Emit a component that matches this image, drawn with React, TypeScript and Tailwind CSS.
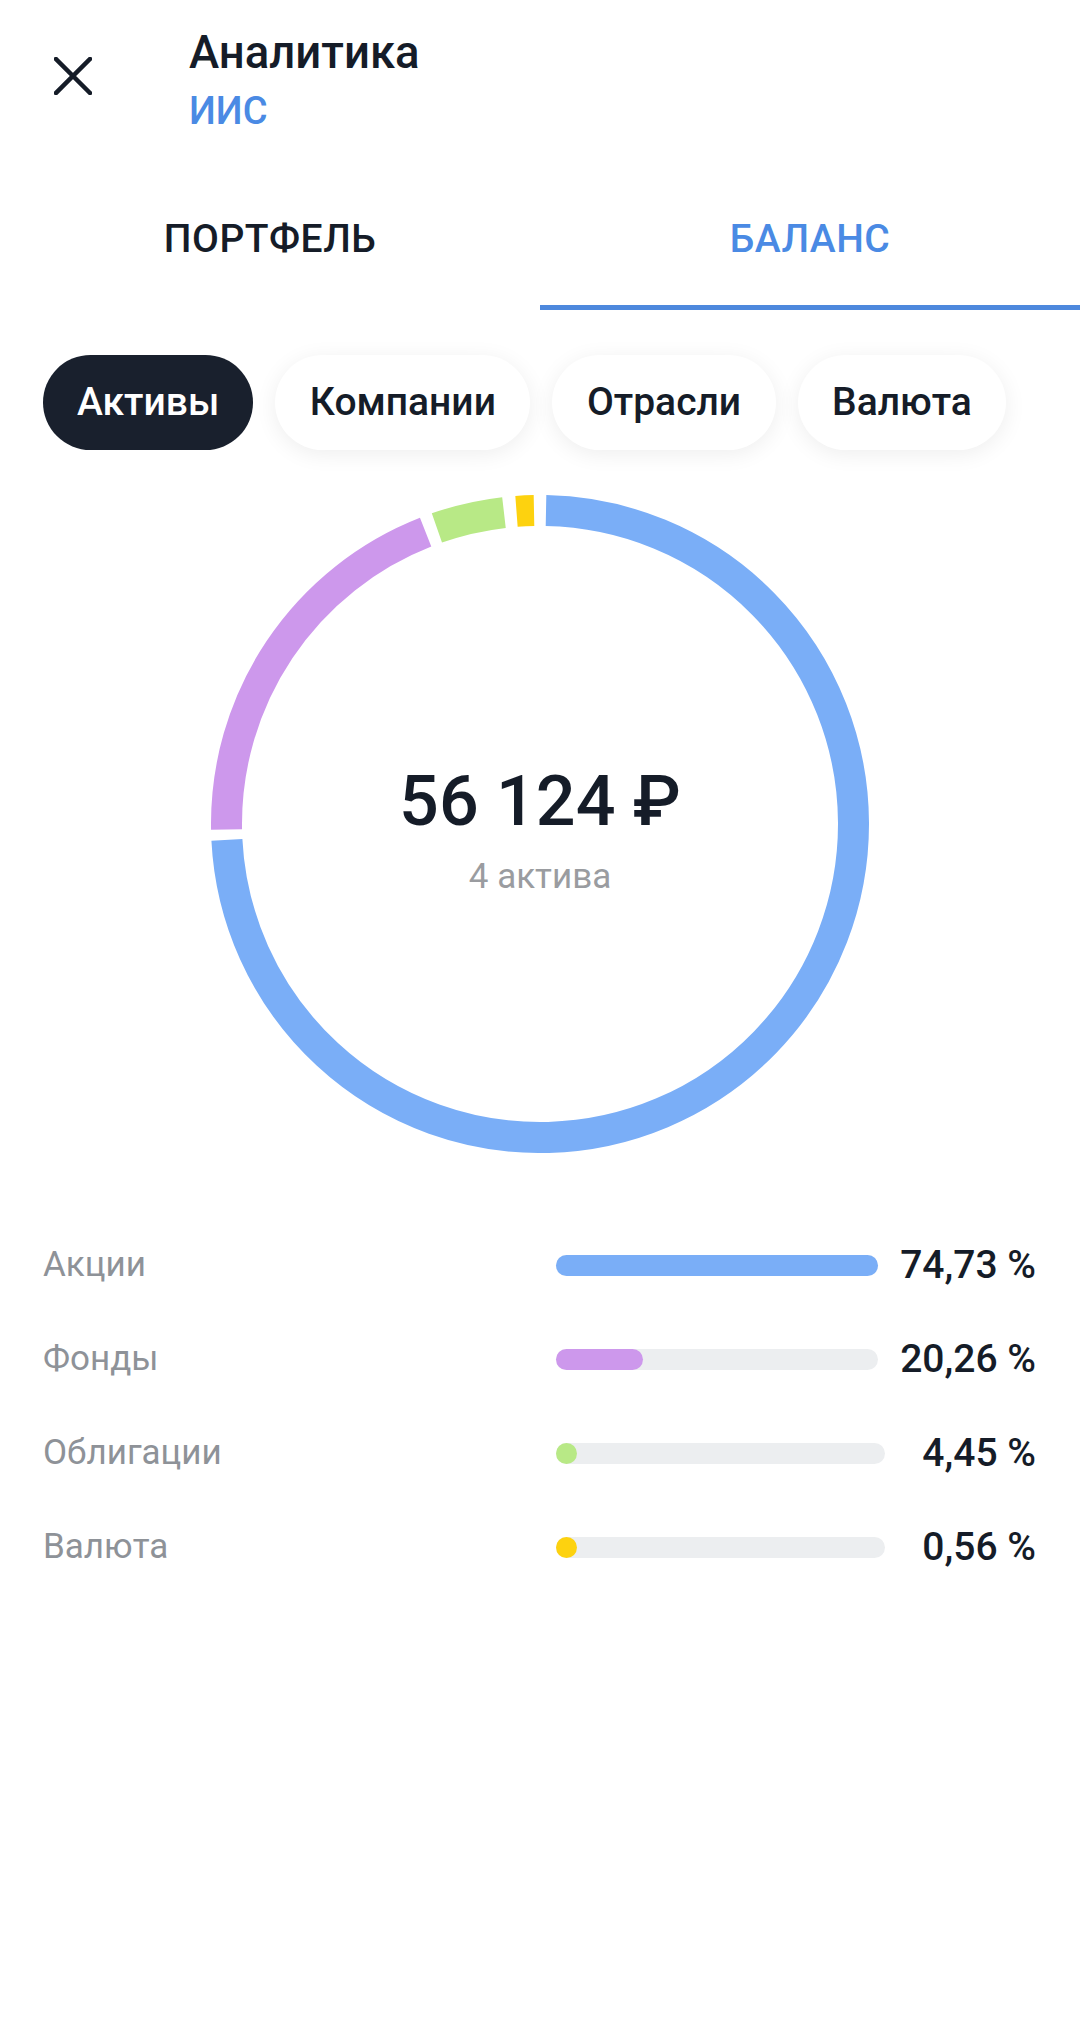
import React from "react";

interface Segment {
  label: string;
  value: number;
  color: string;
  // arc in degrees, clockwise from 12 o'clock
  from: number;
  to: number;
}

const segments: Segment[] = [
  { label: "Акции", value: 74.73, color: "#7aaef7", from: 1.1, to: 267.1 },
  { label: "Фонды", value: 20.26, color: "#cd98ec", from: 269, to: 338.6 },
  { label: "Облигации", value: 4.45, color: "#b8e986", from: 340.8, to: 353.4 },
  { label: "Валюта", value: 0.56, color: "#fdd20f", from: 355.7, to: 358.9 },
];

const filters = ["Активы", "Компании", "Отрасли", "Валюта"];

const polar = (cx: number, cy: number, r: number, deg: number) => {
  const rad = ((deg - 90) * Math.PI) / 180;
  return { x: cx + r * Math.cos(rad), y: cy + r * Math.sin(rad) };
};

const arcPath = (cx: number, cy: number, r: number, from: number, to: number) => {
  const a = polar(cx, cy, r, from);
  const b = polar(cx, cy, r, to);
  const large = to - from > 180 ? 1 : 0;
  return `M ${a.x} ${a.y} A ${r} ${r} 0 ${large} 1 ${b.x} ${b.y}`;
};

const formatPct = (v: number) => v.toFixed(2).replace(".", ",") + " %";

const Donut = () => {
  const size = 658;
  const c = size / 2;
  return (
    <div className="relative mx-auto h-[658px] w-[658px]">
      <svg width={size} height={size} viewBox={`0 0 ${size} ${size}`}>
        {segments.map((s) => (
          <path
            key={s.label}
            d={arcPath(c, c, 313.5, s.from, s.to)}
            fill="none"
            stroke={s.color}
            strokeWidth={31}
            strokeLinecap="butt"
          />
        ))}
      </svg>
      <div className="absolute left-0 right-0 top-[266px] flex flex-col items-center">
        <span className="text-[70px] font-medium leading-[80px] text-[#151c28]">
          56 124 ₽
        </span>
        <span className="mt-[15px] text-[35px] leading-[42px] text-[#9a9ca0]">
          4 актива
        </span>
      </div>
    </div>
  );
};

const App = () => {
  const max = Math.max(...segments.map((s) => s.value));

  return (
    <div className="min-h-[2031px] w-[1080px] bg-white font-['Roboto','Noto_Sans',sans-serif] text-[#151c28]">
      {/* Header */}
      <header className="flex items-start pl-[54px] pt-[27px]">
        <button type="button" className="mt-[30px] flex h-[38px] w-[38px] items-center justify-center">
          <svg width="38" height="38" viewBox="0 0 38 38">
            <path d="M2 2 L36 36 M36 2 L2 36" stroke="#151c28" strokeWidth="4.5" strokeLinecap="square" />
          </svg>
        </button>
        <div className="ml-[97px] flex flex-col">
          <span className="text-[45.5px] font-medium leading-[52px]">Аналитика</span>
          <span className="mt-[9px] text-[38px] font-medium leading-[46px] text-[#4a8ae4]">ИИС</span>
        </div>
      </header>

      {/* Tabs */}
      <nav className="mt-[82px] flex">
        <button type="button" className="flex flex-1 flex-col items-center">
          <span className="text-[39px] font-medium leading-[46px] tracking-[0.5px]">ПОРТФЕЛЬ</span>
          <span className="mt-[43px] h-[5px] w-full bg-transparent" />
        </button>
        <button type="button" className="flex flex-1 flex-col items-center">
          <span className="text-[39px] font-medium leading-[46px] tracking-[0.5px] text-[#4a8ae4]">
            БАЛАНС
          </span>
          <span className="mt-[43px] h-[5px] w-full bg-[#4d88dd]" />
        </button>
      </nav>

      {/* Filter chips */}
      <div className="mt-[45px] flex gap-[22px] pl-[43px]">
        {filters.map((f, i) => (
          <button
            key={f}
            type="button"
            className={
              i === 0
                ? "flex h-[95px] items-center rounded-full bg-[#19202d] px-[34px] text-[39px] font-medium text-white"
                : "flex h-[95px] items-center rounded-full bg-white px-[34.5px] text-[39px] font-medium text-[#151c28] shadow-[0_4px_22px_rgba(0,0,0,0.07)]"
            }
          >
            {f}
          </button>
        ))}
      </div>

      {/* Chart */}
      <div className="mt-[45px]">
        <Donut />
      </div>

      {/* Legend */}
      <div className="mt-[65px] flex flex-col pl-[43px] pr-[44px]">
        {segments.map((s) => (
          <div key={s.label} className="flex h-[94px] items-center">
            <span className="w-[513px] text-[35px] leading-[42px] text-[#8e9298]">{s.label}</span>
            <div className="h-[21px] flex-1 rounded-full bg-[#eceef0]">
              <div
                className="h-full min-w-[21px] rounded-full"
                style={{ width: `${(s.value / max) * 100}%`, backgroundColor: s.color }}
              />
            </div>
            <span className="min-w-[151px] pl-[22px] text-right text-[39px] font-medium leading-[46px]">
              {formatPct(s.value)}
            </span>
          </div>
        ))}
      </div>
    </div>
  );
};

export default App;
